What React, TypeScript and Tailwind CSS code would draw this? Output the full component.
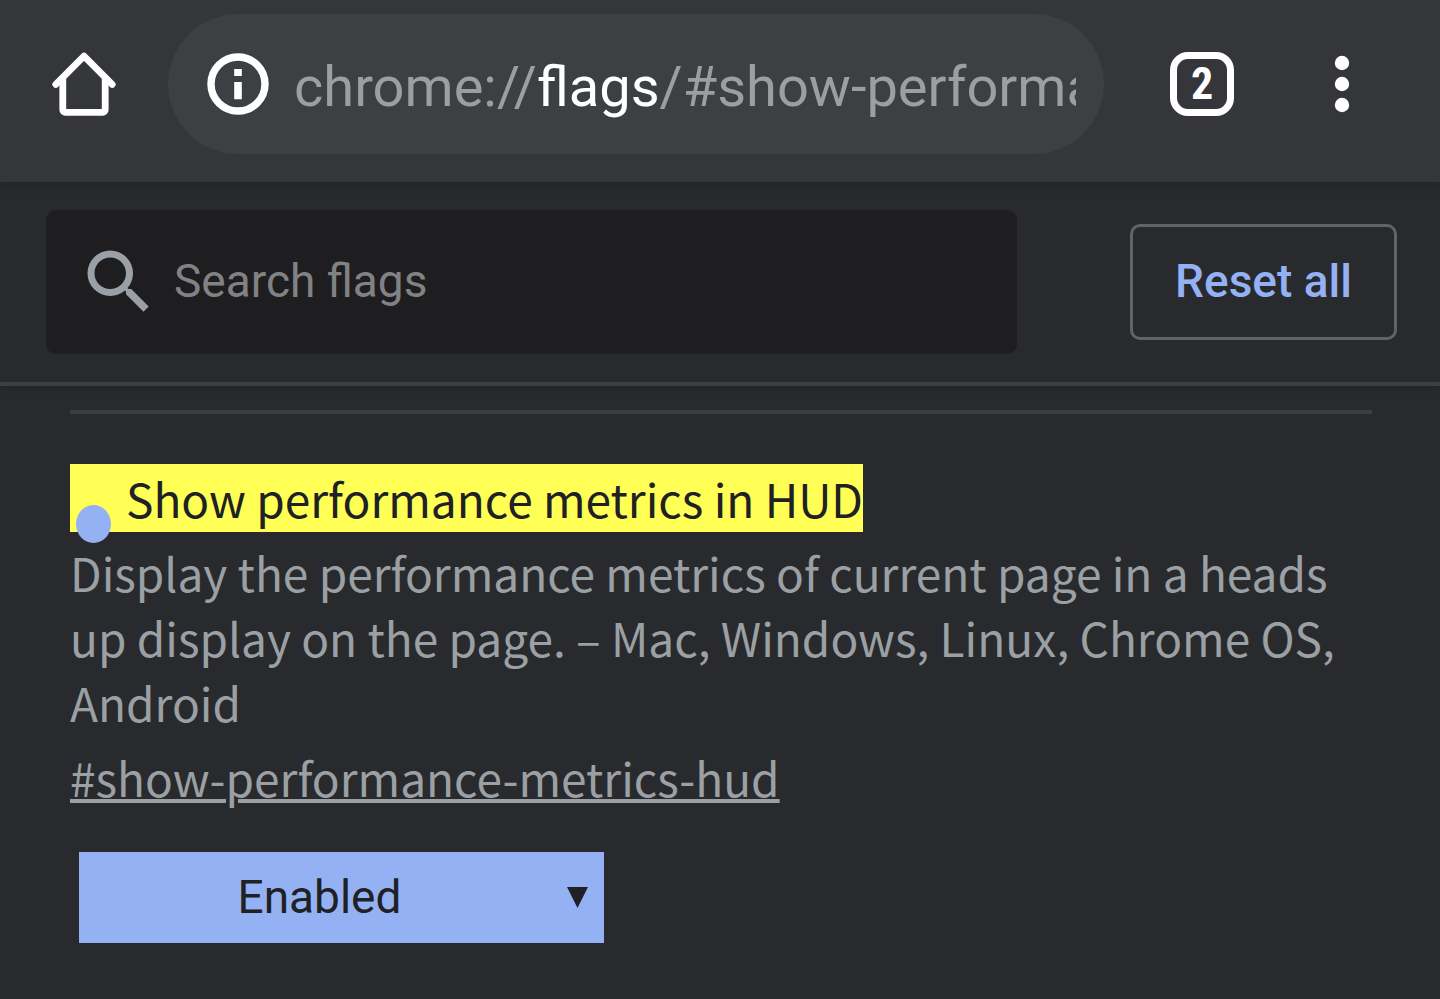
import React, { useState } from "react";

function HomeIcon() {
  return (
    <svg viewBox="0 0 64 64" className="size-16" fill="none" stroke="currentColor" strokeWidth="6.8" strokeLinecap="round" strokeLinejoin="round">
      <path d="M3.8 32.300 32 4.200 60.200 32.300" />
      <path d="M10.800 27V57.700a2.600 2.600 0 0 0 2.600 2.600H50.600a2.600 2.600 0 0 0 2.600-2.600V27" />
    </svg>
  );
}

function InfoIcon() {
  return (
    <svg viewBox="0 0 62 62" className="size-[62px]" fill="none">
      <circle cx="31" cy="31" r="27" stroke="currentColor" strokeWidth="7.4" />
      <path fill="currentColor" d="M27.200 16h7.600v7h-7.600zM27.200 29h7.600v17.300h-7.600z" />
    </svg>
  );
}

function DotsIcon() {
  return (
    <svg viewBox="0 0 16 64" className="h-16 w-4" fill="currentColor">
      <circle cx="8" cy="11" r="7.2" />
      <circle cx="8" cy="32" r="7.2" />
      <circle cx="8" cy="53" r="7.2" />
    </svg>
  );
}

function SearchIcon() {
  return (
    <svg viewBox="0 0 24 24" className="size-[84px] shrink-0 text-[#9aa0a6]" fill="currentColor">
      <path d="M15.5 14h-.79l-.28-.27A6.47 6.47 0 0 0 16 9.5 6.5 6.5 0 1 0 9.5 16c1.61 0 3.09-.59 4.23-1.57l.27.28v.79l5 4.99L20.49 19l-4.99-5zm-6 0C7.01 14 5 11.99 5 9.5S7.01 5 9.5 5 14 7.01 14 9.5 11.99 14 9.5 14z" />
    </svg>
  );
}

function Toolbar() {
  return (
    <header className="relative z-10 flex items-center bg-[#35363a] pt-[14px] pr-[90px] pb-7 pl-[52px] text-white shadow-[0_0_14px_4px_rgba(0,0,0,0.14)]">
      <button type="button" aria-label="Home">
        <HomeIcon />
      </button>

      <div className="ml-[52px] flex h-[140px] min-w-0 flex-1 items-center rounded-full bg-[#3c4043] pr-7 pl-[39px]">
        <button type="button" aria-label="Site information" className="shrink-0">
          <InfoIcon />
        </button>
        <div
          role="textbox"
          aria-label="Address"
          tabIndex={0}
          className="ml-[25px] min-w-0 flex-1 overflow-hidden pt-1.5 text-[56px] leading-[72px] whitespace-nowrap text-[#9e9ea0]"
        >
          chrome://<span className="text-white">flags</span>/#show-performance-metrics-hud
        </div>
      </div>

      <button
        type="button"
        aria-label="Switch tabs"
        className="ml-[66px] flex size-16 items-center justify-center rounded-[18px] border-[7px] border-white font-['Roboto_Condensed','Open_Sans_Condensed','Noto_Sans_Condensed','Roboto',sans-serif] text-[44px] leading-none font-bold"
      >
        2
      </button>
      <button type="button" aria-label="More options" className="ml-[100px]">
        <DotsIcon />
      </button>
    </header>
  );
}

export default function App() {
  const [search, setSearch] = useState("");
  const [value, setValue] = useState("Enabled");

  return (
    <div className="min-h-screen bg-[#292a2d] font-['Roboto',sans-serif]">
      <Toolbar />

      <div className="flex items-center border-b-4 border-[#3d3e41] py-7 pr-[43px] pl-[46px] shadow-[0_0_10px_3px_rgba(0,0,0,0.14)]">
        <label className="flex h-36 min-w-0 flex-1 items-center rounded-[10px] bg-[#1e1e20] pr-6 pl-[31px]">
          <SearchIcon />
          <input
            type="text"
            aria-label="Search flags"
            placeholder="Search flags"
            value={search}
            onChange={(e) => setSearch(e.target.value)}
            className="ml-[13px] min-w-0 flex-1 bg-transparent pb-0.5 text-[46px] text-[#e8eaed] outline-none placeholder:text-[#828284]"
          />
        </label>
        <button
          type="button"
          className="ml-[113px] h-[116px] w-[267px] shrink-0 rounded-[10px] border-[3px] border-[#626367] pb-0.5 text-[46px] font-medium text-[#94b2f3]"
        >
          Reset all
        </button>
      </div>

      <main className="pt-6 pr-[68px] pb-14 pl-[70px] font-['Noto_Sans_CJK_SC',sans-serif] text-[46px] text-[#9aa0a3]">
        <hr className="border-t-4 border-[#3d3e41]" />

        <h2 className="relative mt-[50px] w-fit bg-[#ffff55] pl-14 leading-[68px] text-[#202124]">
          <span className="absolute top-[41px] left-[6px] h-[38px] w-[35px] rounded-[50%] bg-[#94b2f3]" />
          Show performance metrics in HUD
        </h2>
        <p className="mt-2 leading-[65px]">
          Display the performance metrics of current page in a heads up display on the page. – Mac, Windows, Linux, Chrome OS, Android
        </p>
        <a href="#show-performance-metrics-hud" className="mt-2 block w-fit leading-[68px] underline decoration-4">
          #show-performance-metrics-hud
        </a>

        <div className="relative mt-[41px] ml-[9px] w-[525px] max-w-full">
          <select
            aria-label="Show performance metrics in HUD"
            value={value}
            onChange={(e) => setValue(e.target.value)}
            className="block h-[91px] w-full appearance-none bg-[#94b2f3] pr-11 text-center font-['Roboto',sans-serif] text-[46px] text-[#202124]"
          >
            <option>Default</option>
            <option>Enabled</option>
            <option>Disabled</option>
          </select>
          <svg viewBox="0 0 21 21" className="pointer-events-none absolute top-[35px] right-4 size-[21px] text-[#202124]" fill="currentColor">
            <path d="M0 0h21L10.500 21z" />
          </svg>
        </div>
      </main>
    </div>
  );
}
